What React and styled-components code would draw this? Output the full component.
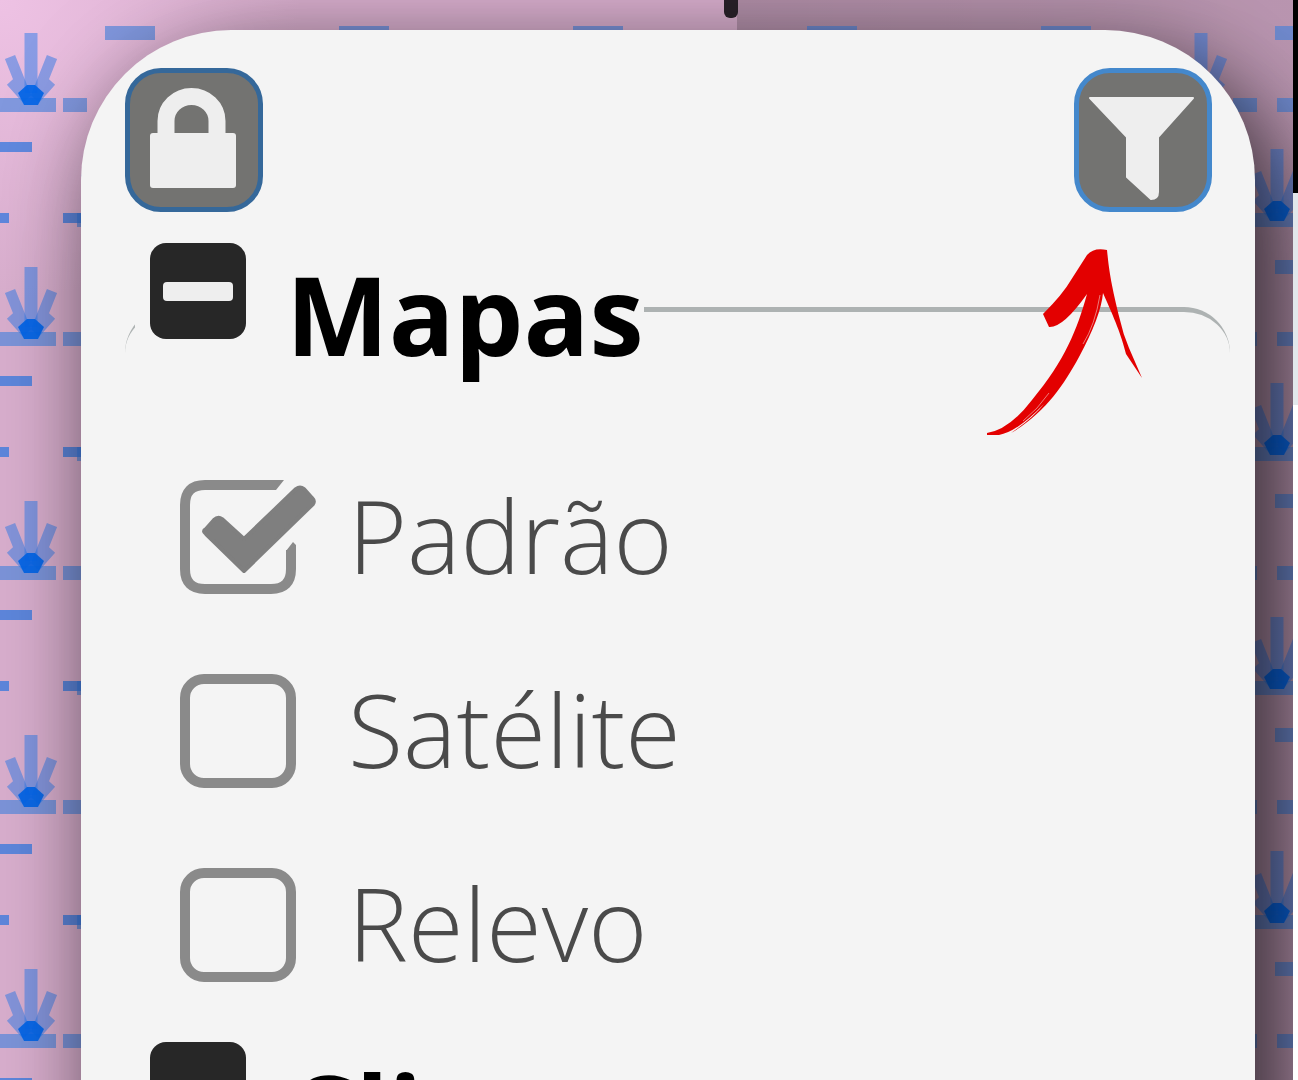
import React from 'react';
import styled, { createGlobalStyle } from 'styled-components';

const GlobalStyle = createGlobalStyle`
  * {
    box-sizing: border-box;
  }

  body {
    margin: 0;
    overflow: hidden;
    font-family: "Open Sans", "Noto Sans", sans-serif;
  }
`;

const Page = styled.div`
  display: flex;
  height: 100vh;
  overflow: hidden;
  background: #ffffff;
`;

const MapArea = styled.main`
  position: relative;
  flex: 1;
  min-width: 0;
  padding: 30px 38px 0 81px;
  overflow: hidden;
  background:
    linear-gradient(90deg, transparent 0 57%, rgb(0 0 0 / 18%) 57%, rgb(0 0 0 / 14%) 100%),
    radial-gradient(circle at 0 0, #eec2e4 0, #d8aecd 300px);
`;

const MapPattern = styled.svg`
  position: absolute;
  inset: 0;
  width: 100%;
  height: 100%;
`;

const MapMarker = styled.span`
  position: absolute;
  top: 0;
  left: 56%;
  width: 14px;
  height: 18px;
  border-radius: 0 0 6px 6px;
  background: #2a222a;
`;

const Strip = styled.div`
  display: flex;
  flex-direction: column;
  width: 5px;
`;

const StripPart = styled.span`
  height: ${props => props.$height};
  background: ${props => props.$color};
`;

const Panel = styled.section`
  position: relative;
  min-height: 100vh;
  padding: 38px 25px 0 44px;
  border-radius: 150px 150px 0 0;
  background: #f4f4f4;
  box-shadow:
    12px 20px 90px rgb(0 0 0 / 50%),
    40px 60px 90px rgb(0 0 0 / 40%);
`;

const PanelHeader = styled.header`
  display: flex;
  justify-content: space-between;
  padding-right: 18px;
`;

const IconButton = styled.button`
  width: 138px;
  height: 144px;
  padding: 0;
  border: 5px solid ${props => props.$border};
  border-radius: 36px;
  background: #737371;
  cursor: pointer;

  svg {
    display: block;
    width: 100%;
    height: 100%;
  }
`;

const Group = styled.fieldset`
  min-width: 0;
  margin: ${props => props.$gap} 0 0;
  padding: 0;
  border: 0 solid #adb2b2;
  border-top-width: 5px;
  border-radius: 46px 46px 0 0;
`;

const GroupTitle = styled.legend`
  display: flex;
  align-items: flex-start;
  gap: 40px;
  margin-left: 10px;
  padding: 8px 0 0 15px;
  color: #000000;
  font-size: 109px;
  font-weight: 700;
  line-height: 147px;
`;

const CollapseButton = styled.button`
  display: grid;
  place-items: center;
  width: 96px;
  height: 96px;
  margin-top: 3px;
  padding: 0;
  border: 0;
  border-radius: 16px;
  background: #272727;
  cursor: pointer;
`;

const Minus = styled.span`
  width: 70px;
  height: 19px;
  border-radius: 4px;
  background: #eeeeee;
`;

const Options = styled.ul`
  margin: 0;
  padding: 53px 0 0 55px;
  list-style: none;
`;

const Option = styled.li`
  display: flex;
  align-items: center;
  gap: 52px;
  height: 194px;
`;

const OptionLabel = styled.label`
  padding-bottom: 4px;
  color: #4a4a4a;
  font-size: 101px;
  font-weight: 300;
  line-height: 1;
  cursor: pointer;
`;

const CheckWrapper = styled.span`
  display: grid;
  flex: none;
  width: 116px;
  height: 114px;
`;

const CheckMark = styled.svg`
  grid-area: 1 / 1;
  width: 100%;
  height: 100%;
  overflow: visible;
  visibility: hidden;
  pointer-events: none;
`;

const CheckInput = styled.input`
  grid-area: 1 / 1;
  width: 100%;
  height: 100%;
  margin: 0;
  appearance: none;
  border: 10px solid #8a8a8a;
  border-radius: 24px;
  cursor: pointer;

  &:checked {
    border-color: transparent;
  }

  &:checked + ${CheckMark} {
    visibility: visible;
  }
`;

const Arrow = styled.svg`
  position: absolute;
  top: 218px;
  right: 112px;
  width: 156px;
  height: 188px;
  pointer-events: none;
`;

const MarshPattern = () => (
  <MapPattern aria-hidden="true">
    <defs>
      <g id="reed">
        <path d="M0 2V62" stroke="#3a80e8" strokeOpacity="0.55" strokeWidth="13" />
        <path
          d="M-21 26L-5 66M21 26L5 66M-20 50L-4 68M20 50L4 68"
          stroke="#2e78e6"
          strokeOpacity="0.5"
          strokeWidth="11"
          strokeLinejoin="round"
        />
        <path d="M-4 54H4L13 62L7 74H-7L-13 62Z" fill="#0064e8" fillOpacity="0.9" />
      </g>
      <pattern id="marsh" width="234" height="234" patternUnits="userSpaceOnUse">
        <g stroke="#3d80e0" strokeOpacity="0.6" strokeWidth="14">
          <path d="M0 105H56M63 105H87M107 105H160" />
          <path d="M105 33H155" />
          <path d="M77 220H137" />
        </g>
        <path d="M0 147H32M0 218H9M63 218H82" stroke="#3478e0" strokeOpacity="0.75" strokeWidth="10" />
        <use href="#reed" x="31" y="31" />
        <use href="#reed" x="107" y="147" />
      </pattern>
    </defs>
    <rect width="100%" height="100%" fill="url(#marsh)" />
  </MapPattern>
);

const LockIcon = () => (
  <svg viewBox="5 5 128 134" aria-hidden="true">
    <path d="M41 68V53a25 24 0 0 1 51 0V68" fill="none" stroke="#eeeeee" strokeWidth="17" />
    <rect x="25" y="65" width="86" height="55" rx="3" fill="#eeeeee" />
  </svg>
);

const FilterIcon = () => (
  <svg viewBox="5 5 128 134" aria-hidden="true">
    <path
      d="M16 30H119L84 69V124Q84 131 77 131L53 109V69Z"
      fill="#eeeeee"
      stroke="#eeeeee"
      strokeWidth="2"
      strokeLinejoin="round"
    />
  </svg>
);

const LayerOption = ({ id, name, checked }) => (
  <Option>
    <CheckWrapper>
      <CheckInput type="checkbox" id={id} defaultChecked={checked} />
      <CheckMark viewBox="0 0 116 114" aria-hidden="true">
        <path
          d="M96 5H25Q5 5 5 25V89Q5 109 25 109H91Q111 109 111 89V70"
          fill="none"
          stroke="#8a8a8a"
          strokeWidth="10"
        />
        <path d="M96 0H104L96 10ZM106 71L113 62L116 65V71Z" fill="#8a8a8a" />
        <path
          d="M26 49Q22 51 26 54L64 91L133 24Q135 21 132 18L124 9Q120 6 116 9L64 59L42 39Q38 36 34 40Z"
          fill="#7f7f7f"
          stroke="#7f7f7f"
          strokeWidth="4"
          strokeLinejoin="round"
        />
      </CheckMark>
    </CheckWrapper>
    <OptionLabel htmlFor={id}>{name}</OptionLabel>
  </Option>
);

const LayerGroup = ({ title, gap, children }) => (
  <Group $gap={gap}>
    <GroupTitle>
      <CollapseButton type="button" aria-label={`Recolher ${title}`}>
        <Minus />
      </CollapseButton>
      {title}
    </GroupTitle>
    {children}
  </Group>
);

const App = () => {
  return (
    <Page>
      <GlobalStyle />
      <MapArea>
        <MarshPattern />
        <MapMarker />
        <Panel>
          <PanelHeader>
            <IconButton type="button" aria-label="Bloquear" $border="#35689a">
              <LockIcon />
            </IconButton>
            <IconButton type="button" aria-label="Filtrar" $border="#4488cc">
              <FilterIcon />
            </IconButton>
          </PanelHeader>
          <LayerGroup title="Mapas" gap="20px">
            <Options>
              <LayerOption id="padrao" name="Padrão" checked />
              <LayerOption id="satelite" name="Satélite" />
              <LayerOption id="relevo" name="Relevo" />
            </Options>
          </LayerGroup>
          <LayerGroup title="Clima" gap="9px" />
          <Arrow viewBox="0 0 156 188" aria-hidden="true">
            <path
              d="M100 7Q107 -1 120 2C122 22 124 36 133 72Q136 86 142 100L155 130L139 106C134 86 128 72 116 45Q114 68 92 109C76 138 58 165 24 185Q46 170 57 156Q30 184 12 187H0V185Q22 182 45 152C78 112 90 82 100 46Q76 80 62 79L56 66Q76 46 84 32Z"
              fill="#e30000"
            />
            <path d="M113 47Q108 77 96 96M62 145Q51 161 36 173" fill="none" stroke="#f4f4f4" strokeOpacity="0.5" />
          </Arrow>
        </Panel>
      </MapArea>
      <Strip>
        <StripPart $height="193px" $color="#000000" />
        <StripPart $height="212px" $color="#e2e7eb" />
      </Strip>
    </Page>
  );
};

export default App;
